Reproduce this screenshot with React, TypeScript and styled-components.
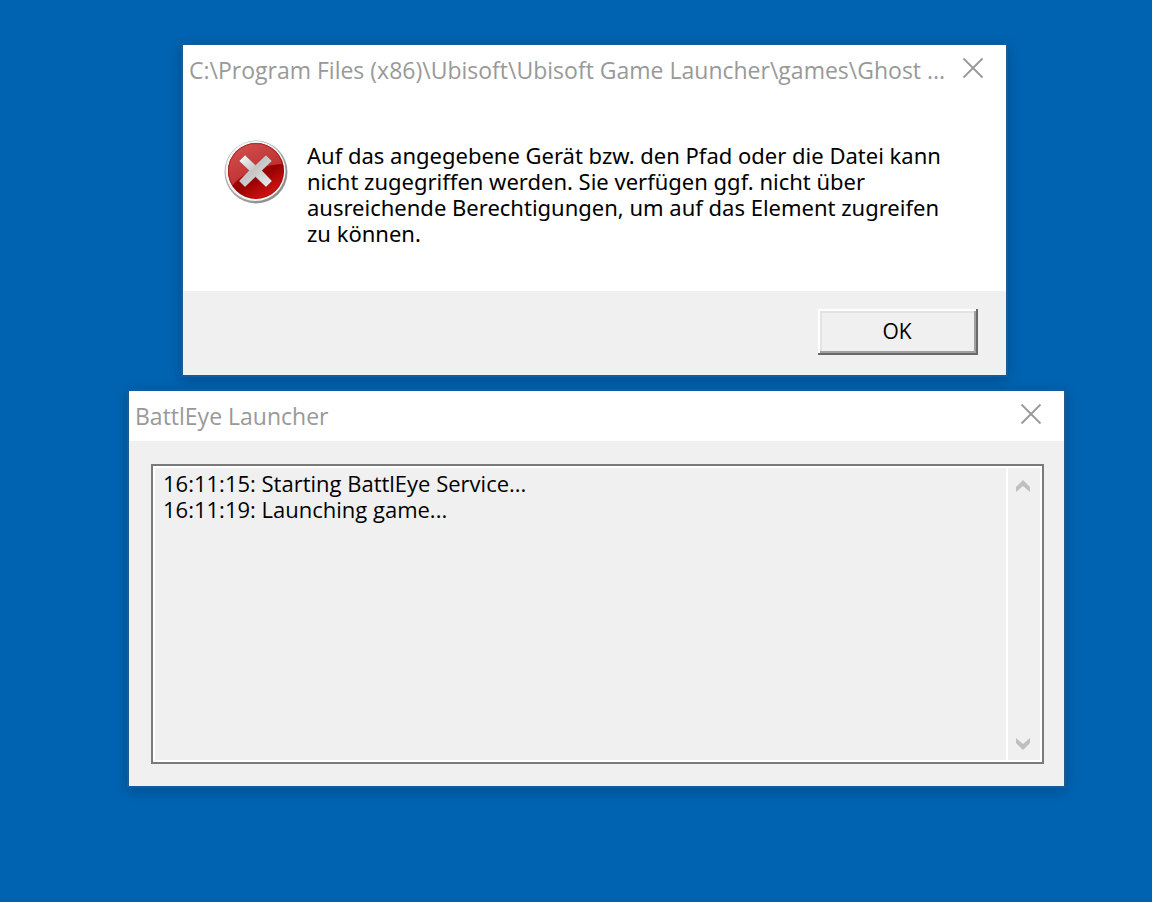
import React from "react";
import styled, { createGlobalStyle } from "styled-components";

const GlobalStyle = createGlobalStyle`
  * {
    box-sizing: border-box;
  }

  body {
    margin: 0;
    background: #0063b1;
    font-family: "Open Sans", "Noto Sans", sans-serif;
    color: #000;
  }
`;

const Desktop = styled.main`
  position: relative;
  min-height: 100vh;
  overflow: hidden;
`;

const Window = styled.section<{ $top: number; $left: number; $right: number }>`
  position: absolute;
  top: ${(p) => p.$top}px;
  left: ${(p) => p.$left}px;
  right: ${(p) => p.$right}px;
  display: flex;
  flex-direction: column;
  border: 2px solid #1f5a8f;
  border-top-color: #0f5da0;
  border-bottom-color: #0f5da0;
  background: #fff;
  box-shadow: 0 3px 12px rgba(0, 0, 0, 0.22);
`;

const TitleBar = styled.header`
  display: flex;
  align-items: flex-start;
  justify-content: space-between;
  height: 50px;
  padding: 0 20px 0 6px;
`;

const Title = styled.h1`
  flex: 1;
  min-width: 0;
  margin: 0;
  overflow: hidden;
  font-size: 23px;
  font-weight: 400;
  line-height: 50px;
  white-space: nowrap;
  color: #999;
`;

const CloseButton = styled.button`
  display: flex;
  margin: 0;
  padding: 12px 2px;
  border: 0;
  background: none;
`;

const Message = styled.div`
  display: flex;
  align-items: flex-start;
  gap: 19px;
  padding: 45px 40px 45px 41px;
`;

const MessageText = styled.p`
  flex: 1;
  margin: 0;
  padding-top: 2px;
  font-family: "Noto Sans", sans-serif;
  font-size: 22px;
  line-height: 26px;
`;

const Footer = styled.footer`
  display: flex;
  justify-content: flex-end;
  padding: 18px 28px 20px;
  background: #f0f0f0;
`;

const OkButton = styled.button`
  width: 160px;
  height: 46px;
  padding: 0 2px 2px 0;
  border: 0;
  background: #f0f0f0;
  box-shadow:
    inset 0 -2px #696969,
    inset -2px 0 #696969,
    inset 2px 2px #fff,
    inset 0 -4px #a0a0a0,
    inset -4px 0 #a0a0a0,
    inset 4px 4px #e3e3e3;
  font-family: inherit;
  font-size: 21px;
  line-height: 26px;
  color: #000;
`;

const LauncherBody = styled.div`
  padding: 23px 20px 22px 22px;
  background: #f0f0f0;
`;

const LogFrame = styled.div`
  display: flex;
  border: 2px solid #7a7a7a;
  background: #fff;
  padding: 2px;
  gap: 2px;
`;

const Log = styled.textarea`
  flex: 1;
  min-width: 0;
  height: 292px;
  margin: 0;
  padding: 2px 8px;
  border: 0;
  outline: 0;
  resize: none;
  overflow: hidden;
  background: #f0f0f0;
  font-family: inherit;
  font-size: 22px;
  line-height: 26px;
  color: #000;
`;

const ScrollBar = styled.div`
  display: flex;
  flex-direction: column;
  justify-content: space-between;
  width: 32px;
  background: #f0f0f0;
`;

const ScrollButton = styled.button`
  display: flex;
  justify-content: flex-start;
  padding: 12px 8px 10px;
  border: 0;
  background: none;
`;

const CloseIcon = () => (
  <svg width="22" height="22" viewBox="0 0 22 22" aria-hidden="true">
    <path d="M1.5 1.5 20.5 20.5M20.5 1.5 1.5 20.5" stroke="#999" strokeWidth="1.8" fill="none" />
  </svg>
);

const ErrorIcon = () => (
  <svg width="64" height="64" viewBox="0 0 64 64" role="img" aria-label="Fehler">
    <defs>
      <linearGradient id="rim" x1="0" y1="0" x2="1" y2="1">
        <stop offset="0" stopColor="#b4b4b4" />
        <stop offset="0.5" stopColor="#a8a8a8" />
        <stop offset="1" stopColor="#808080" />
      </linearGradient>
      <linearGradient id="disc" x1="0.2" y1="0" x2="0.8" y2="1">
        <stop offset="0.3" stopColor="#b40000" />
        <stop offset="0.6" stopColor="#980000" />
        <stop offset="1" stopColor="#e01818" />
      </linearGradient>
      <linearGradient id="gloss" x1="0" y1="0" x2="0.7" y2="1">
        <stop offset="0" stopColor="#d45a5a" />
        <stop offset="1" stopColor="#b82020" />
      </linearGradient>
      <linearGradient id="cross" x1="0" y1="0" x2="1" y2="1">
        <stop offset="0" stopColor="#fff" />
        <stop offset="0.45" stopColor="#c4c4c4" />
        <stop offset="1" stopColor="#eee" />
      </linearGradient>
      <clipPath id="face">
        <circle cx="32" cy="31" r="28" />
      </clipPath>
    </defs>
    <circle cx="32" cy="32" r="31.5" fill="url(#rim)" />
    <circle cx="31.5" cy="31" r="30" fill="#f4f4f4" />
    <circle cx="32" cy="31" r="28" fill="url(#disc)" />
    <path d="M0 0H64V24C50 24 35 27 24 33 15 38 9 43 7 50L0 50Z" fill="url(#gloss)" clipPath="url(#face)" />
    <circle cx="32" cy="31" r="27.5" fill="none" stroke="#8f0000" strokeOpacity="0.45" />
    <path
      d="M21 15 31.5 25 42 15 48 21 38 30.5 48 41 42 47 31.5 37 21 47 15 41 25 30.5 15 21Z"
      fill="url(#cross)"
      stroke="#8a1010"
      strokeOpacity="0.3"
      strokeLinejoin="round"
    />
  </svg>
);

const Arrow = ({ down }: { down?: boolean }) => (
  <svg width="14" height="12" viewBox="0 0 14 12" aria-hidden="true">
    <path d={down ? "M0 0 7 6 14 0V5L7 12 0 5Z" : "M0 12 7 6 14 12V7L7 0 0 7Z"} fill="#bfbfbf" />
  </svg>
);

const LOG_TEXT = ["16:11:15: Starting BattlEye Service...", "16:11:19: Launching game..."].join("\n");

export default function App() {
  return (
    <>
      <GlobalStyle />
      <Desktop>
        <Window $top={43} $left={181} $right={144} role="alertdialog" aria-labelledby="error-title">
          <TitleBar>
            <Title id="error-title">
              C:\Program Files (x86)\Ubisoft\Ubisoft Game Launcher\games\Ghost ...
            </Title>
            <CloseButton type="button" aria-label="Schließen">
              <CloseIcon />
            </CloseButton>
          </TitleBar>
          <Message>
            <ErrorIcon />
            <MessageText>
              Auf das angegebene Gerät bzw. den Pfad oder die Datei kann nicht zugegriffen werden. Sie
              verfügen ggf. nicht über ausreichende Berechtigungen, um auf das Element zugreifen zu
              können.
            </MessageText>
          </Message>
          <Footer>
            <OkButton type="button">OK</OkButton>
          </Footer>
        </Window>

        <Window $top={389} $left={127} $right={86} aria-labelledby="launcher-title">
          <TitleBar>
            <Title id="launcher-title">BattlEye Launcher</Title>
            <CloseButton type="button" aria-label="Close">
              <CloseIcon />
            </CloseButton>
          </TitleBar>
          <LauncherBody>
            <LogFrame>
              <Log readOnly aria-labelledby="launcher-title" value={LOG_TEXT} />
              <ScrollBar>
                <ScrollButton type="button" disabled aria-label="Scroll up">
                  <Arrow />
                </ScrollButton>
                <ScrollButton type="button" disabled aria-label="Scroll down">
                  <Arrow down />
                </ScrollButton>
              </ScrollBar>
            </LogFrame>
          </LauncherBody>
        </Window>
      </Desktop>
    </>
  );
}
